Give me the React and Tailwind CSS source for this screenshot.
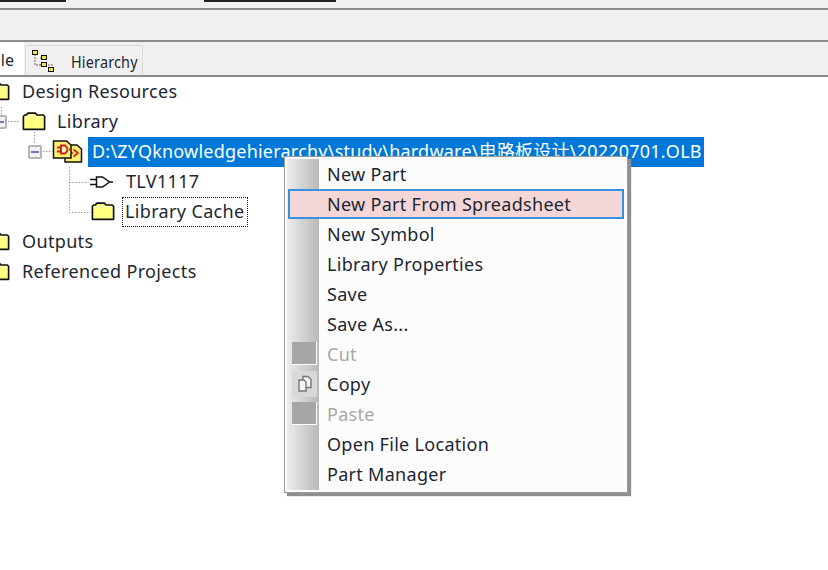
import React from "react";

const font = { fontFamily: '"Noto Sans", "Noto Sans CJK SC", sans-serif' };

const Folder = ({ className = "" }) => (
  <svg width="24" height="19" viewBox="0 0 26 20" className={`-mt-[2px] shrink-0 ${className}`}>
    <path d="M1.500 18.500V4.500L3 3h1.500L6.500 1h8l2 2h6.500l1.500 1.500v14z" fill="#ffff80" stroke="#111" strokeWidth="1.800" strokeLinejoin="round" />
    <path d="M2.500 4.800H23.500" stroke="#fff" strokeWidth="1" opacity="0.7" />
  </svg>
);

const PartIcon = () => (
  <svg width="32" height="25" viewBox="0 0 32 24" className="-mt-[2px] shrink-0">
    <path d="M13 5.500h12l4.500 4v13H13z" fill="#ffef70" stroke="#111" strokeWidth="1.500" />
    <path d="M21.500 10l4.500 3.500-4.500 3.500M18 13.500h3" fill="none" stroke="#c8201a" strokeWidth="1.600" />
    <path d="M1.500 1.500h13l4.500 4v13H1.500z" fill="#ffef70" stroke="#111" strokeWidth="1.500" />
    <path d="M9 6h4q5 4 0 8H9zM5 8h4M5 12h4M17 10h2" fill="#fff6c0" stroke="#c8201a" strokeWidth="1.800" />
  </svg>
);

const GateIcon = () => (
  <svg width="26" height="14" viewBox="0 0 26 14" className="shrink-0">
    <path d="M8.500 2h6l7 5-7 5h-6zM2 4.500h6.500M2 9.500h6.500M21.500 7H25" fill="#fff" stroke="#111" strokeWidth="1.500" />
  </svg>
);

const HierarchyIcon = () => (
  <svg width="34" height="26" viewBox="0 0 34 26" className="shrink-0">
    <path d="M5 6v11h18M10 10h3M10 17h3" fill="none" stroke="#666" strokeDasharray="2 1" />
    <rect x="2.500" y="2.500" width="5" height="4" fill="#f1e33a" stroke="#111" />
    <rect x="11.500" y="7.500" width="5" height="4" fill="#f1e33a" stroke="#111" />
    <rect x="11.500" y="14.500" width="5" height="4" fill="#f1e33a" stroke="#111" />
    <rect x="18.500" y="19.500" width="5" height="4" fill="#f1e33a" stroke="#111" />
  </svg>
);

const TreeLines = () => (
  <svg width="110" height="210" className="absolute left-0 top-0" fill="none" stroke="#999" strokeDasharray="1.500 1.500">
    <path d="M1.500 30v8M8 44.500h12M34.500 55v12M43 74.500h10M69.500 90v45.500h21M69.500 105.500h19" />
  </svg>
);

const rows = [
  { label: "New Part" },
  { label: "New Part From Spreadsheet", active: true },
  { label: "New Symbol" },
  { label: "Library Properties" },
  { label: "Save" },
  { label: "Save As..." },
  { label: "Cut", disabled: true, icon: "box" },
  { label: "Copy", icon: "copy" },
  { label: "Paste", disabled: true, icon: "box" },
  { label: "Open File Location" },
  { label: "Part Manager" },
];

const MenuRow = ({ label, active, disabled, icon }) => (
  <div
    className={`relative flex h-[30px] items-center text-[18px] leading-none tracking-[0.3px] ${
      disabled ? "text-[#a8a8a8]" : "text-[#1c2733]"
    } ${active ? "ml-[1px] mr-[1px] border-2 border-[#3c8fdc] bg-[#f5d6d6] pl-[37px]" : "pl-[40px]"}`}
  >
    {icon === "box" && <div className="absolute left-[5px] top-[3px] h-[23px] w-[25px] border-b border-r border-white bg-[#a6a6a6]" />}
    {icon === "copy" && (
      <div className="absolute left-[5px] top-[2px] flex h-[26px] w-[25px] items-center justify-center bg-[#d8d8d8]">
        <svg width="16" height="18" viewBox="0 0 16 18" fill="#f4f4f4" stroke="#777" strokeWidth="1.400">
          <path d="M6 1.500h5l3 3v8H6z" />
          <path d="M2 5h5l2 2v9H2z" />
        </svg>
      </div>
    )}
    {label}
  </div>
);

const ContextMenu = () => (
  <div className="absolute left-[284px] top-[156px] w-[344px] border border-[#9a9a9a] bg-[#fcfcfc] px-[2px] pb-[3px] pt-[2px] shadow-[3px_3px_1px_#8f8f8f]">
    <div className="absolute bottom-[2px] left-[2px] top-[2px] w-[32px] bg-gradient-to-r from-[#ececec] to-[#b9b9b9]" />
    <div className="relative">
      {rows.map((row) => (
        <MenuRow key={row.label} {...row} />
      ))}
    </div>
  </div>
);

const TreeRow = ({ indent, children }) => (
  <div className="flex h-[30px] items-center" style={{ marginLeft: indent }}>
    {children}
  </div>
);

const Label = ({ className = "", children }) => <span className={`pb-[2px] ${className}`}>{children}</span>;

const Toggle = () => (
  <div className="flex h-[14px] w-[14px] shrink-0 items-center justify-center rounded-[2px] border-2 border-[#b5b5b5] bg-[#f2f2f2]">
    <div className="h-[2px] w-[8px] bg-[#6a7fb0]" />
  </div>
);

export default function App() {
  return (
    <div className="relative h-[570px] w-[828px] overflow-hidden bg-white text-[#1c2733]" style={font}>
      <div className="h-[10px] border-b-2 border-[#8c8c8c] bg-[#f0f0f0]">
        <div className="flex h-[2px]">
          <div className="h-[2px] w-[66px] bg-[#222]" />
          <div className="ml-[138px] h-[2px] w-[132px] bg-[#222]" />
        </div>
      </div>
      <div className="h-[32px] border-b-2 border-[#8c8c8c] bg-[#f0f0f0]" />
      <div className="flex h-[35px] items-end border-b-2 border-[#8c8c8c] bg-[#f0f0f0]">
        <div className="flex h-[33px] w-[24px] items-center justify-end bg-white pr-[10px] pt-[3px] text-[16px] leading-none">
          <span className="whitespace-nowrap">ile</span>
        </div>
        <div className="ml-[1px] flex h-[30px] w-[118px] items-center border border-b-0 border-[#d9d9d9] pl-[4px] text-[16px] leading-none">
          <HierarchyIcon />
          <span className="ml-[7px] mt-[3px] origin-left scale-x-90 whitespace-nowrap tracking-[0.2px]">Hierarchy</span>
        </div>
      </div>

      <div className="relative text-[18px] leading-none tracking-[0.35px]">
        <TreeLines />
        <TreeRow indent={-14}>
          <Folder />
          <Label className="ml-[12px]">Design Resources</Label>
        </TreeRow>
        <TreeRow indent={-7}>
          <Toggle />
          <Folder className="ml-[15px]" />
          <Label className="ml-[11px]">Library</Label>
        </TreeRow>
        <TreeRow indent={28}>
          <Toggle />
          <div className="ml-[10px]">
            <PartIcon />
          </div>
          <div className="ml-[4px] flex h-[30px] w-[616px] items-center whitespace-nowrap bg-[#0078d7] pb-[2px] pl-[4px] tracking-[0.22px] text-white">
            D:\ZYQknowledgehierarchy\study\hardware\电路板设计\20220701.OLB
          </div>
        </TreeRow>
        <TreeRow indent={88}>
          <GateIcon />
          <Label className="ml-[12px]">TLV1117</Label>
        </TreeRow>
        <TreeRow indent={91}>
          <Folder />
          <span className="ml-[7px] flex h-[30px] items-center border border-dotted border-[#111] px-[2px] pb-[2px]">Library Cache</span>
        </TreeRow>
        <TreeRow indent={-14}>
          <Folder />
          <Label className="ml-[12px]">Outputs</Label>
        </TreeRow>
        <TreeRow indent={-14}>
          <Folder />
          <Label className="ml-[12px]">Referenced Projects</Label>
        </TreeRow>
      </div>

      <ContextMenu />
    </div>
  );
}
